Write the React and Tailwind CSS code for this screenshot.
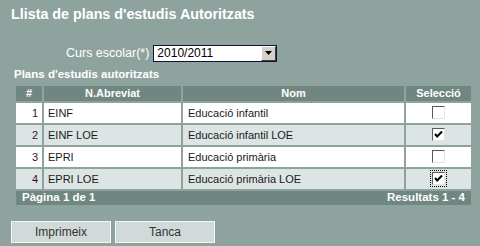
import React from "react";

const rows = [
  { n: 1, abr: "EINF", nom: "Educació infantil", sel: false },
  { n: 2, abr: "EINF LOE", nom: "Educació infantil LOE", sel: true },
  { n: 3, abr: "EPRI", nom: "Educació primària", sel: false },
  { n: 4, abr: "EPRI LOE", nom: "Educació primària LOE", sel: true, focus: true },
];

function Check({ checked, focus }) {
  const box = (
    <div className="relative h-[13px] w-[13px] bg-white border border-t-[#5a5a5a] border-l-[#5a5a5a] border-b-[#e4e4e4] border-r-[#e4e4e4]">
      {checked && (
        <svg viewBox="0 0 11 11" className="absolute left-0 top-0 h-[11px] w-[11px]">
          <path d="M2 5 L4.2 7.5 L9 2.5" fill="none" stroke="#000" strokeWidth="2" />
        </svg>
      )}
    </div>
  );
  if (focus) {
    return <div className="p-[1px] outline-1 outline-dotted outline-black">{box}</div>;
  }
  return box;
}

export default function App() {
  return (
    <div className="h-[246px] w-[480px] bg-[#8fa39e] font-['Liberation_Sans',Arial,sans-serif] text-[11px] text-[#1a1a1a]">
      <div className="pl-[11px] pt-[4px] text-[14.3px] font-bold leading-[20px] text-white">
        Llista de plans d'estudis Autoritzats
      </div>
      <div className="mt-[20px] flex items-center pl-[66px]">
        <span className="text-[12.5px] text-white">Curs escolar(*)</span>
        <div className="ml-[4px] flex h-[17px] w-[124px] items-center border border-[#10103a] bg-white">
          <span className="flex-1 pl-[3px] text-[12px] leading-[15px] text-black">2010/2011</span>
          <div className="flex h-[15px] w-[15px] items-center justify-center border border-t-white border-l-white border-b-[#404040] border-r-[#404040] bg-[#d4d0c8]">
            <svg viewBox="0 0 7 4" className="h-[4px] w-[7px]">
              <path d="M0 0 H7 L3.5 4 Z" fill="#000" />
            </svg>
          </div>
        </div>
      </div>
      <div className="mt-[4px] pl-[14px] text-[11.5px] font-bold leading-[14px] text-white">
        Plans d'estudis autoritzats
      </div>
      <div className="ml-[16px] mt-[5px] grid w-[455px] grid-cols-[26px_137px_221px_65px] gap-x-[2px] gap-y-[2px]">
        <div className="flex h-[15px] items-center justify-center bg-[#6f8681] font-bold text-white">#</div>
        <div className="flex h-[15px] items-center justify-center bg-[#6f8681] font-bold text-white">N.Abreviat</div>
        <div className="flex h-[15px] items-center justify-center bg-[#6f8681] font-bold text-white">Nom</div>
        <div className="flex h-[15px] items-center justify-center bg-[#6f8681] font-bold text-white">Selecció</div>
        {rows.map((r, i) => {
          const bg = i % 2 === 0 ? "bg-white" : "bg-[#dde5e4]";
          return (
            <React.Fragment key={r.n}>
              <div className={`flex h-[20px] items-center justify-end pr-[4px] text-[#3a0d3a] ${bg}`}>{r.n}</div>
              <div className={`flex h-[20px] items-center pl-[4px] ${bg}`}>{r.abr}</div>
              <div className={`flex h-[20px] items-center pl-[5px] ${bg}`}>{r.nom}</div>
              <div className={`flex h-[20px] items-center justify-center ${bg}`}>
                <Check checked={r.sel} focus={r.focus} />
              </div>
            </React.Fragment>
          );
        })}
        <div className="col-span-4 flex h-[14px] items-center justify-between bg-[#6f8681] px-[6px] text-[11.5px] font-bold text-white">
          <span>Pàgina 1 de 1</span>
          <span>Resultats 1 - 4</span>
        </div>
      </div>
      <div className="ml-[11px] mt-[16px] flex gap-[4px]">
        <button className="h-[22px] w-[100px] border border-[#f4f6f6] bg-[#d1d9d9] text-[12px] text-[#333]">Imprimeix</button>
        <button className="h-[22px] w-[100px] border border-[#f4f6f6] bg-[#d1d9d9] text-[12px] text-[#333]">Tanca</button>
      </div>
    </div>
  );
}
